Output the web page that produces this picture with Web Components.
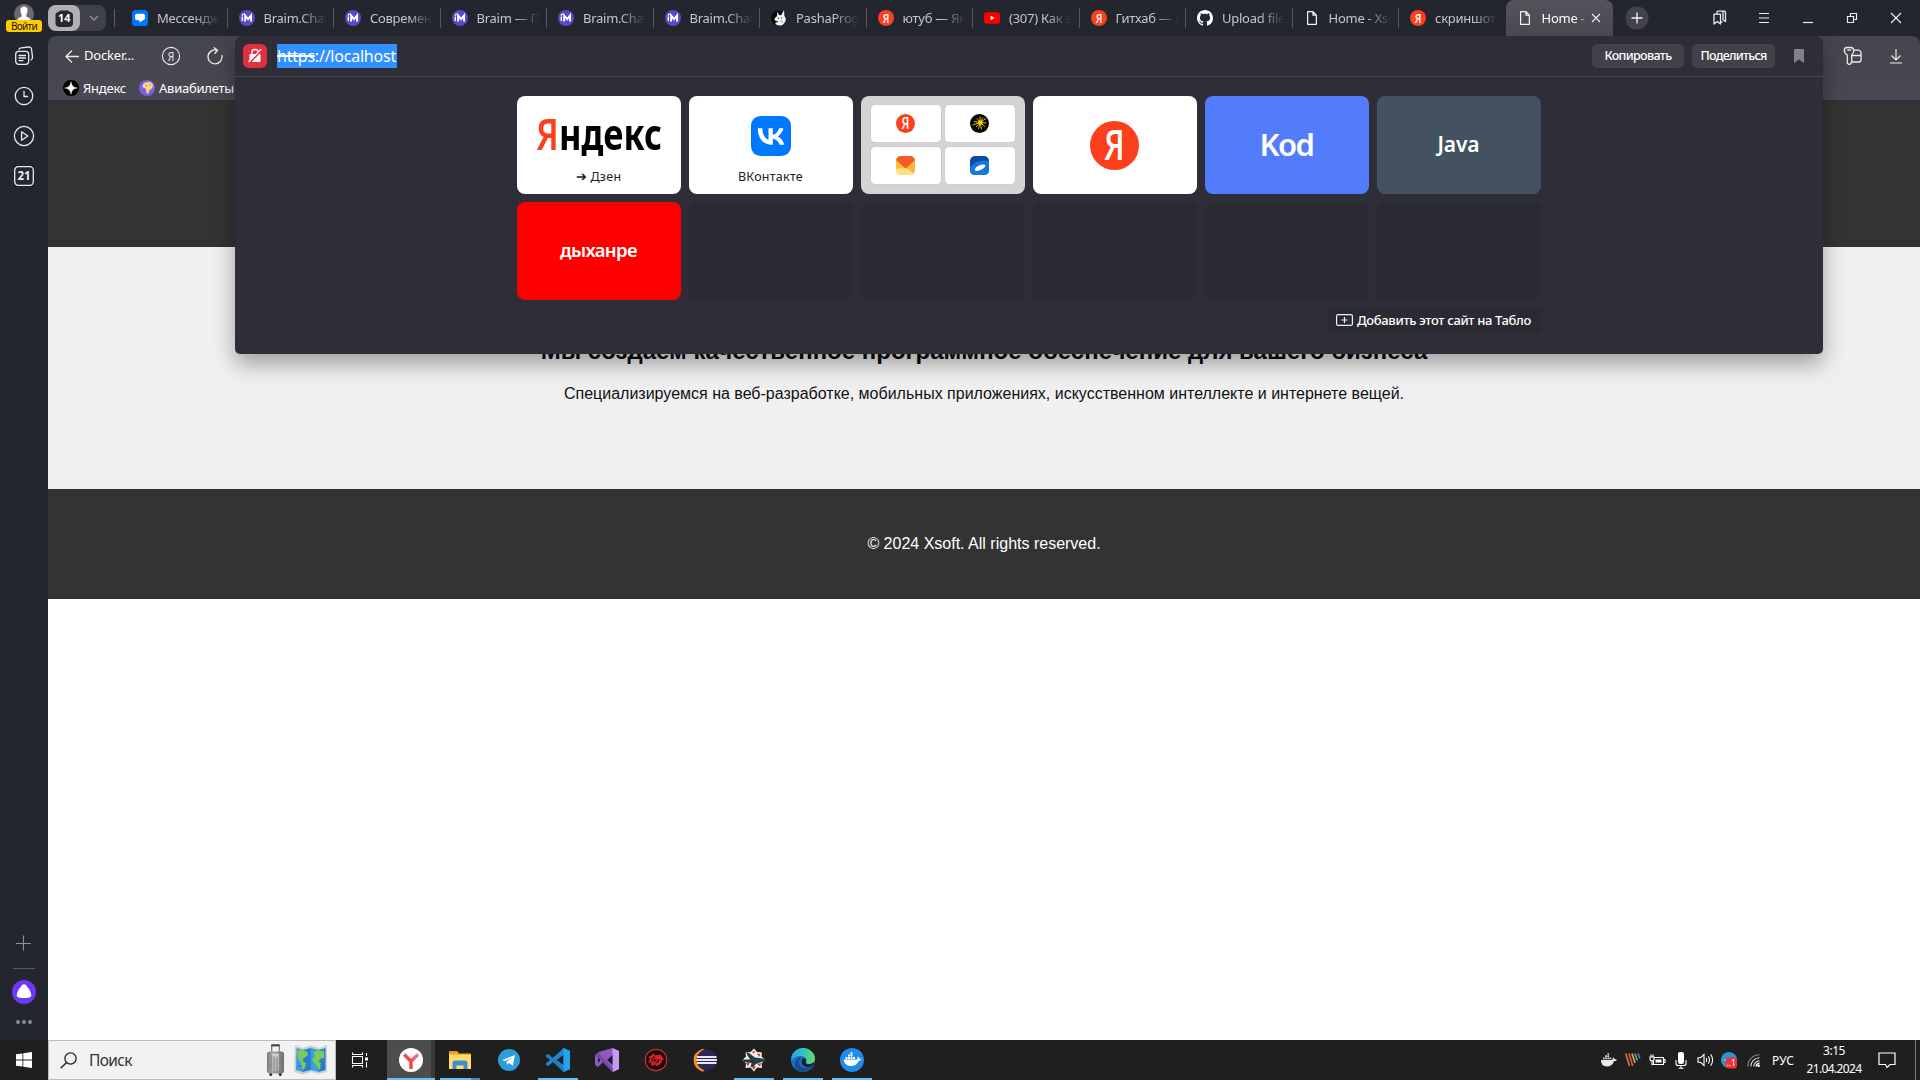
<!DOCTYPE html>
<html lang="ru">
<head>
<meta charset="utf-8">
<title>Home - Xsoft</title>
<style>
html,body{margin:0;width:1920px;height:1080px;overflow:hidden;background:#fff;font-family:"Noto Sans","Open Sans",sans-serif}
</style>
</head>
<body>
<desktop-screen></desktop-screen>
<script>
const ya=(id)=>`<circle cx="12" cy="12" r="12" fill="#fc3f1d"/><text x="12" y="19" text-anchor="middle" font-family="Open Sans" font-weight="600" font-size="20" textLength="10" lengthAdjust="spacingAndGlyphs" fill="#fff">Я</text>`;
const st='fill="none" stroke="#e9e9ee" stroke-width="1.3" stroke-linecap="round" stroke-linejoin="round"';
const braim='<circle cx="8" cy="8" r="8" fill="#5b47c9"/><path d="M3.3 11V6.600M3.200 5.600Q3.400 4 4.800 4.200" fill="none" stroke="#fff" stroke-width="1.400"/><path d="M6.100 11.400V5.400L9.100 9.200L12.100 5.400V11.400" fill="none" stroke="#fff" stroke-width="1.900"/>';
const page='<path d="M3.6 1.7H9L12.4 5.1V14.3H3.6Z M9 1.7V5.2H12.4" fill="none" stroke="#f2f2f4" stroke-width="1.2" stroke-linejoin="round"/>';
const ICONS={
 avatar:[20,20,'<circle cx="10" cy="10" r="10" fill="#696b70"/><path d="M10 2.6c2.6 0 3.7 1.8 3.5 4.3-.1 2-.9 3-1.2 4v1.6c1 .9 3.6 1 4.3 3.2L10 20 3.4 15.700c.7-2.200 3.300-2.300 4.300-3.200v-1.600c-.300-1-1.100-2-1.200-4C6.300 4.400 7.400 2.600 10 2.600Z" fill="#fff"/>'],
 collect:[20,20,`<g ${st}><rect x="1.700" y="5.300" width="13" height="13" rx="3"/><path d="M5 3.400Q5.500 2 7 1.900L15 1Q17.200 .9 17.500 3L18.500 11Q18.600 13.500 17 14"/><path d="M5 9.500H11.500M5 12H11.500M5 14.600H9"/></g>`],
 clock:[20,20,`<g ${st}><circle cx="10" cy="10" r="8.700"/><path d="M10 5.500V10.500H13.500"/></g>`],
 play:[22,22,`<g ${st}><circle cx="11" cy="11" r="9.600"/><path d="M8.600 6.800L14.800 11L8.600 15.200Z"/></g>`],
 cal:[22,22,`<rect x="1.700" y="1.700" width="18.600" height="18.600" rx="3.500" ${st}/><text x="11" y="15.200" text-anchor="middle" font-family="Noto Sans" font-weight="700" font-size="11.500" fill="#f0f0f3">21</text>`],
 plusThin:[16,16,'<path d="M7.500 .5V15.500M0 8.500H15" stroke="#8e9096" stroke-width="1.100"/>'],
 alice:[24,24,'<circle cx="12" cy="12" r="12" fill="#6c39f6"/><path d="M12 4.200C14.500 4.200 19.300 12 19.300 15.200C19.300 17.600 15.500 18 12 18S4.700 17.600 4.700 15.200C4.700 12 9.500 4.200 12 4.200Z" fill="#fff"/>'],
 dots:[16,4,'<g fill="#8b8d94"><circle cx="2" cy="2" r="2"/><circle cx="8" cy="2" r="2"/><circle cx="14" cy="2" r="2"/></g>'],
 badge14:[32,26,'<path d="M8 26A8 8 0 0 1 0 18V8A8 8 0 0 1 8 0H24A8 8 0 0 1 32 8V18A8 8 0 0 1 24 26Z" fill="#b0b0b5"/><path d="M12 5.500H20Q21.500 7 23.500 7.500Q25 8 25 10V18Q25 22 21 22H12Q7.500 22 7.500 18V10Q7.500 8 9 7.500Q11 7 12 5.500Z" fill="#26272f"/><text x="16.200" y="17.400" text-anchor="middle" font-family="Noto Sans" font-weight="700" font-size="10.800" fill="#fff">14</text>'],
 chev:[10,6,'<path d="M1 1L5 5L9 1" fill="none" stroke="#8e8f97" stroke-width="1.300"/>'],
 msg:[16,16,'<rect width="16" height="16" rx="3.600" fill="#07f"/><path d="M5 3.700H11Q13 3.700 13 5.700V8Q13 10 11 10.200L7.500 12.600V10.200H5Q3 10.200 3 8V5.700Q3 3.700 5 3.700Z" fill="#fff"/>'],
 braim:[16,16,braim],
 pasha:[16,16,'<circle cx="7.500" cy="8" r="7.500" fill="#090a0b"/><path d="M6.200 1.500L8 5L10 5.200L13 .3L13.500 6Q15.800 9 14 12Q12 15.900 8 15.600Q5 15 4 13L7.500 11.500L4.500 10.800Q2.500 9.500 4 8Q6 7 6.200 5Z" fill="#f4f4f4"/><path d="M6.700 8L8 8.300M11 7.600L10 8.500" stroke="#111" stroke-width="1"/><path d="M9 11Q12 10 11.500 13" fill="none" stroke="#999" stroke-width=".7"/>'],
 ya:[24,24,ya()],
 yt:[16,16,'<rect x="0" y="2.200" width="16" height="11.600" rx="3" fill="#f00"/><path d="M6.600 5.800L10.600 8L6.600 10.200Z" fill="#fff"/>'],
 gh:[16,16,'<path fill="#fff" d="M8 0C3.580 0 0 3.580 0 8c0 3.540 2.290 6.530 5.470 7.590.4.070.55-.17.55-.38 0-.19-.01-.82-.01-1.490-2.010.37-2.530-.49-2.690-.94-.09-.23-.48-.94-.82-1.130-.28-.15-.68-.52-.01-.53.63-.01 1.080.58 1.230.82.72 1.210 1.870.87 2.330.66.07-.52.28-.87.51-1.070-1.780-.2-3.640-.89-3.640-3.950 0-.87.31-1.590.82-2.150-.08-.2-.36-1.020.08-2.120 0 0 .67-.21 2.200.82.64-.18 1.320-.27 2-.27s1.360.09 2 .27c1.530-1.040 2.200-.82 2.200-.82.44 1.100.16 1.920.08 2.120.51.56.82 1.270.82 2.150 0 3.070-1.870 3.750-3.650 3.950.29.25.54.73.54 1.480 0 1.070-.01 1.930-.01 2.200 0 .21.15.46.55.38A8.010 8.010 0 0 0 16 8c0-4.420-3.580-8-8-8z"/>'],
 page:[16,16,page],
 x:[10,10,'<path d="M1 1L9 9M9 1L1 9" stroke="#ececef" stroke-width="1.100"/>'],
 close:[12,12,'<path d="M1 1L11 11M11 1L1 11" stroke="#ececef" stroke-width="1.200"/>'],
 newtab:[24,24,'<circle cx="12" cy="12" r="11.500" fill="#42434b"/><path d="M12 6.500V17.500M6.500 12H17.500" stroke="#f1f1f3" stroke-width="1.300"/>'],
 marks:[16,16,`<g ${st}><path d="M2 4.200H8.500V14L5.200 11.500L2 14Z"/><path d="M5 4V2Q5 1.200 6 1.200H12.500Q13.500 1.200 13.500 2.200V11.500L11 9.800V1.500M8.700 12H10"/></g>`],
 menu:[12,12,'<path d="M1 1.500H11M1 6H11M1 10.500H11" stroke="#ececef" stroke-width="1.200"/>'],
 min:[12,12,'<path d="M1 10.500H11" stroke="#ececef" stroke-width="1.200"/>'],
 restore:[12,12,'<path d="M1.500 4.500H7.500V10.500H1.500ZM4.500 4.500V1.500H10.500V7.500H7.500" fill="none" stroke="#ececef" stroke-width="1.200"/>'],
 back:[14,14,`<path d="M13.500 7.500H1M6.500 2L1 7.500L6.500 13" ${st}/>`],
 yaRing:[20,20,'<circle cx="10" cy="10" r="8.600" fill="none" stroke="#e9e9ee" stroke-width="1.100"/><text x="10" y="14.600" text-anchor="middle" font-family="Noto Sans" font-size="12.500" textLength="6.500" lengthAdjust="spacingAndGlyphs" fill="#e9e9ee">Я</text>'],
 reload:[18,18,`<path d="M15.900 8.500A7 7 0 1 1 11.300 3.200M8.200 .7L11.600 3.200L8.900 6.300" ${st}/>`],
 star:[16,16,'<circle cx="8" cy="8" r="8" fill="#000"/><path d="M8 1.800Q8.500 7.500 14.200 8Q8.500 8.500 8 14.200Q7.500 8.500 1.800 8Q7.500 7.500 8 1.800Z" fill="#fff" stroke="#fff" stroke-width=".5"/>'],
 globe:[16,16,'<circle cx="8" cy="8" r="8" fill="#7d5ee9"/><path d="M4 4.500Q5.500 2 8 2.200Q11 1 13.800 4Q14.800 6.500 12.800 8.500L10.500 10Q10.500 12.500 8.500 14Q7 13 7.200 10.500L6 8L3.800 7.500Q3 6 4 4.500Z" fill="#f7dc76"/><path d="M6 5.500L8.500 5L7.500 6.500Z M10.500 3L12 6L10.500 5Z" fill="#8a65d8"/>'],
 lock:[24,24,'<rect width="24" height="24" rx="6" fill="#e3303c"/><rect x="6.500" y="10" width="11" height="8" rx="1" fill="#fff"/><path d="M9 10V7.500Q9 5.500 12 5.500Q15 5.500 15 7.500V10" fill="none" stroke="#fff" stroke-width="1.300"/><path d="M6.500 19L19 6.200" stroke="#e3303c" stroke-width="1.600"/><path d="M5.500 18L18.200 5.200" stroke="#fff" stroke-width="1.200"/>'],
 flag:[10,14,'<path d="M1 0H9Q10 0 10 1V14L5 10.500L0 14V1Q0 0 1 0Z" fill="#828289"/>'],
 key:[20,20,`<g ${st}><path d="M4 1.500H8Q10.800 1.700 10.800 5Q10.500 7.500 8.700 8.800V16.500L7 18.400H5.500L4.300 17V9Q1.300 7.300 1.300 4.200Q1.500 1.500 4 1.500Z M4.800 4H7.500"/><path d="M11 4.200H15.500Q17.800 4.500 18 6.500V14Q18 16 16 16H9M9 9.500H18"/></g>`],
 down:[14,16,'<path d="M7 1V11.500M2.500 7.500L7 12L11.500 7.500M1 15H13" fill="none" stroke="#ececef" stroke-width="1.200"/>'],
 vk:[40,40,'<rect width="40" height="40" rx="9.500" fill="#07f"/><path d="M21.300 28.800C12.200 28.800 7 22.600 6.800 12.200H11.400C11.500 19.800 14.900 23 17.500 23.700V12.200H21.800V18.800C24.400 18.500 27.200 15.500 28.100 12.200H32.400C31.700 16.300 28.700 19.300 26.600 20.500C28.700 21.500 32.100 24.100 33.400 28.800H28.700C27.700 25.600 25.200 23.200 21.800 22.800V28.800Z" fill="#fff"/>'],
 spark:[19,19,'<circle cx="9.500" cy="9.500" r="9.500" fill="#050505"/><path d="M10 8.500L16 4.500M10 8.500L16.500 9M10 8.500L15 12.500M10 8.500L11.500 15.500M10 8.500L8.500 15M10 8.500L6 13M10 8.500L2.500 11M10 8.500L4 7.500M10 8.500L7 4.500M10 8.500L10 2.500M10 8.500L13 3.500" stroke="#fc0" stroke-width=".9"/><circle cx="10.500" cy="8.500" r="2.300" fill="#fc0"/>'],
 mail:[19,19,'<defs><linearGradient id="m" x2="1"><stop stop-color="#ffc233"/><stop offset="1" stop-color="#ffb03d"/></linearGradient></defs><rect width="19" height="19" rx="5" fill="url(#m)"/><path d="M0 13L9.500 11.500L18 17.500Q17 19 14 19H5Q0 19 0 14Z" fill="#ffdf80"/><path d="M1 2Q2 0 5 0H14Q17 0 18 2L19 4L9.500 12.500L0 4Z" fill="#f9582d"/>'],
 disk:[19,19,'<rect width="19" height="19" rx="5" fill="#0a4aa8"/><path d="M0 11Q7 3 19 5V14Q19 19 14 19H5Q0 19 0 14Z" fill="#1877df"/><ellipse cx="10" cy="11.700" rx="5.800" ry="2.300" transform="rotate(-25 10 11.700)" fill="#fff"/>'],
 addBoard:[17,12,'<rect x=".6" y=".6" width="15.800" height="10.800" rx="1.500" fill="none" stroke="#f1f1f3" stroke-width="1.200"/><path d="M8.500 3V9M5.500 6H11.500" stroke="#f1f1f3" stroke-width="1.200"/>'],
 win:[16,16,'<path d="M0 2.300L6.500 1.400V7.600H0ZM7.300 1.300L16 0V7.600H7.300ZM0 8.400H6.500V14.600L0 13.700ZM7.300 8.400H16V16L7.300 14.700Z" fill="#fff"/>'],
 search:[17,17,'<circle cx="10.500" cy="6.500" r="5.600" fill="none" stroke="#222" stroke-width="1.300"/><path d="M6.500 10.500L.7 16.300" stroke="#222" stroke-width="1.400"/>'],
 bag:[20,34,'<defs><linearGradient id="b" x2="1"><stop stop-color="#777"/><stop offset=".3" stop-color="#aaa"/><stop offset="1" stop-color="#707070"/></linearGradient></defs><path d="M6 9V2Q6 1 7 1H13Q14 1 14 2V9" fill="none" stroke="#777" stroke-width="1.300"/><path d="M5.500 1.500H14.500" stroke="#445" stroke-width="2"/><rect x="1" y="8" width="18" height="23" rx="3" fill="url(#b)"/><rect x="6.500" y="10" width="7" height="18" fill="#bcbcbc"/><path d="M5.500 12V28M8.500 14V28M11.500 14V28M14.500 12V28" stroke="#858585" stroke-width="1"/><path d="M7 11.500H13" stroke="#eee"/><circle cx="5" cy="32" r="1.600" fill="#333"/><circle cx="15" cy="32" r="1.600" fill="#333"/>'],
 map:[36,32,'<path d="M2 1L10 4L18 1.500L26 4L34 1V28L26 30L18 28L10 30.500L1 28Z" fill="#c8d1d9"/><path d="M3.500 4L10 6V28L3 26Z M18 4L26 6V28L18 26Z" fill="#3f9be3"/><path d="M10 6L18 4V26L10 28Z M26 6L32.500 4V26L26 28Z" fill="#2b7fcf"/><path d="M4 7L8 5.500L14 7.500L15 11L11 14L9 17L13 19L12 24L10 26L8 19L5 14Z M20 8L25 6.500L31 7L31 14L27 15L26 18L29 20L27 26L23 21L19 16L22 12Z" fill="#7bcb55"/><path d="M5 22H8M28 20H31V25H28Z" fill="none" stroke="#276ea9"/>'],
 view:[18,16,'<path d="M1.500 4.500H11.500V11.500H1.500ZM1.500 .5V2.500H11.500V.5M1.500 15.500V13.500H11.500V15.500M15.500 1V4M15.500 10V15.500" fill="none" stroke="#fff" stroke-width="1.100"/><rect x="14" y="5.500" width="3" height="3" fill="#fff"/>'],
 yb:[24,24,'<defs><linearGradient id="y" x1="0" y1="1" x2="1" y2="0"><stop offset=".4" stop-color="#f9402c"/><stop offset="1" stop-color="#e76fe0"/></linearGradient></defs><circle cx="12" cy="12" r="12" fill="#fff"/><path d="M5.200 6.500L12 13.300V21M12 13.300L19 6.500" fill="none" stroke="url(#y)" stroke-width="3.400"/>'],
 folder:[22,18,'<path d="M0 1Q0 0 1 0H8L10 2.500H21Q22 2.500 22 3.500V17Q22 18 21 18H0Z" fill="#f0b429"/><path d="M0 4H22V18H0Z" fill="#ffdc6b"/><path d="M3.500 18V12Q3.500 9.500 6 9.500H16Q18.500 9.500 18.500 12V18H14.500V14.500H7.500V18Z" fill="#3b91d0"/><path d="M0 0H8L9 2H0Z" fill="#dc9c14"/>'],
 tg:[22,22,'<circle cx="11" cy="11" r="11" fill="#2a9fd8"/><path d="M4.300 11L17 6L14.800 16.800L11 14L9 15.800L8.700 12.800L14.500 8L7.200 12.200Z" fill="#fff"/>'],
 code:[24,24,'<path d="M17.500 0L24 3V21L17.500 24L7 14L2.200 18L0 16.700V15.300L4 12L0 8.700V7.300L2.200 6L7 10Z" fill="#2187ce"/><path d="M17.500 7L10.500 12L17.500 17Z" fill="#202020"/><path d="M17.500 0L24 3V21L17.500 24Z" fill="#25a4ee"/><path d="M0 7.300L2.200 6L18 19.500V24Z" fill="#1f79bd" opacity=".65"/>'],
 vs:[24,24,'<path d="M0 5L3 4L18 24L24 21V3L17.500 0L8 10L3.200 5.500L0 7V17L3 19L8 14L17.500 24V0Z" fill="#8a5bc1"/><path d="M17.500 0L24 3V21L17.500 24Z" fill="#c59bf0"/><path d="M17.500 7L12 12L17.500 17Z M3 9V15L5.500 12Z" fill="#241d2c"/><path d="M0 7L3 4.500L18 20V24L3 9.500Z" fill="#754aa9"/>'],
 red:[24,24,'<circle cx="12" cy="12" r="10.700" fill="#140b0d" stroke="#cf2a39" stroke-width="1.200"/><path d="M5.500 8.500L8 9L9 6.500L11 8.500L14 8L12.500 10.500M5.500 8.500L7 11L5.500 13.500L8 14.500L8.500 17L11 15.500L13 17L14 14.500" fill="none" stroke="#e0212e" stroke-width="1.800"/><circle cx="10.800" cy="12.300" r="2" fill="none" stroke="#d8202c" stroke-width="1.200"/><path d="M15.500 16V9M13.500 10.500L16 7L19 11Z M13 17Q18 15 17.500 11" fill="#e0212e" stroke="#e0212e" stroke-width="1.200"/>'],
 eclipse:[24,24,'<path d="M9 1Q0 5 .7 12Q.5 20 9 23.500L12 23Q3.500 18 3.500 12Q3.500 5 12 1Z" fill="#f8941e"/><circle cx="13.800" cy="12" r="10.200" fill="#30275f"/><path d="M4 9H23.500M3.300 12H24M4 15H23.500" stroke="#e9e8f0" stroke-width="1.900"/>'],
 jet:[24,24,'<path d="M12 .5L15 4L20 4.500L19.500 8.500L23.500 12L19.500 15.500L20 20L15 19.500L12 23.500L8.500 19.500L3.500 20L4 15.500L.5 12L4 8.500L3.500 4.500L8.500 4Z" fill="#f4f1ef"/><path d="M10 4L13 2.500L12 6Z M15 5.500L18.500 6L17 9Z M5 6L8 6L6 9Z M4 15L8 14L6 18.500Z M15 16L19 15L18 18.500Z M10 19L14 18L12 22Z" fill="#d9352c"/><path d="M4 4.500L7 5L13 9.500L17 10L23 11L24 13L18 14.500L14 16L11 19H8.500L9.500 15L2 14L0 11.500L8 11.500Z" fill="#253c48"/>'],
 edge:[24,24,'<defs><linearGradient id="e" x2="1"><stop stop-color="#26a6e0"/><stop offset=".6" stop-color="#35c9bb"/><stop offset="1" stop-color="#6cdc58"/></linearGradient></defs><circle cx="12" cy="12" r="12" fill="#1671c2"/><path d="M.3 10C1.200 4.500 6 0 12 0C19 0 24 5.500 24 10.500C24 14.500 20.500 16.500 17.500 16C14.500 15.600 14.500 14.200 15 13.400C16 11.500 14 8 9.500 8C5 8 1.500 10.500 .3 13Z" fill="url(#e)"/><path d="M9.300 10.500C6 14.500 9 20.500 15.500 20.200C18.500 20 21 18.500 22 17.500C19 23.500 11 26 6 22C2 18 4 11 9.300 8.500Z" fill="#134f91"/><path d="M15 13.400C14.500 14.200 14.500 15.600 17.500 16C20 16.300 23 15 23.700 12.500L22.500 17Q18 21 13 18Q10 16 10.500 12Q12 9 14.500 10.500Q15.800 12 15 13.400Z" fill="#202020"/>'],
 docker:[24,24,'<circle cx="12" cy="12" r="12" fill="#218be9"/><path d="M3.800 11.500H17.500Q17 9.500 18 8.500Q19.300 9.300 19.400 10.800Q21 10.500 21.500 11.200Q20.500 12.800 18.700 13Q16.500 18 10.500 18Q4 18 3.800 11.500Z" fill="#fff"/><path d="M5.500 9H7.500V11H5.500ZM8 9H10V11H8ZM10.500 9H12.500V11H10.500ZM13 9H15V11H13ZM8 6.500H10V8.500H8ZM10.500 6.500H12.500V8.500H10.500ZM10.500 4.200H12.500V6H10.500Z" fill="#fff"/>'],
 whale:[16,14,'<path d="M0 7H11.500Q11.200 5 12.300 4.200Q13.400 5 13.500 6.200Q15.200 5.900 15.900 6.700Q14.800 8.300 13 8.300Q11 13.500 5.800 13.500Q0 13.500 0 7Z" fill="#e8e8e8"/><path d="M2 4.500H3.700V6.300H2ZM4.200 4.500H5.900V6.300H4.200ZM6.400 4.500H8.100V6.300H6.400ZM8.600 4.500H10.300V6.300H8.600ZM4.200 2.300H5.900V4H4.200ZM6.400 2.300H8.100V4H6.400ZM6.400 .3H8.100V1.800H6.400Z" fill="#d8d8d8"/>'],
 stripes:[16,14,'<g stroke-width="1.700"><path d="M.8 .5L4.500 13" stroke="#dd6d3c"/><path d="M4 .5L7.700 13" stroke="#d85d35"/><path d="M7 .5L10 10" stroke="#d5a16b"/><path d="M10 .5L12.200 7.500" stroke="#55a0a0"/><path d="M13 .5L14.800 5.500" stroke="#427fc0"/></g>'],
 power:[17,12,'<path d="M5.500 3.500H14.500V10.500H4.500V7M14.500 5.500H16V8.500H14.500M3 7V10.500H4.500M1 3H5V5.500Q4.500 7 3 7Q1.500 7 1 5.500ZM2 .5V3M4 .5V3" fill="none" stroke="#fff" stroke-width="1.100"/><path d="M6.500 5.500H12.500V8.500H6.500Z" fill="#fff"/>'],
 mic:[12,17,'<rect x="3" y="0" width="6" height="12" rx="2" fill="#fff"/><path d="M1 8V11.500Q1 13.500 3 13.500H9Q11 13.500 11 11.500V8M6 13.500V16.500M3.500 16.300H8.500" fill="none" stroke="#fff" stroke-width="1.100"/>'],
 vol:[17,14,'<path d="M1 4.700H3.500L7 1.500V12.500L3.500 9.300H1Z M9 5Q10.300 7 9 9M11.300 3.200Q13.700 7 11.300 10.800M13.700 1.300Q17.500 7 13.700 12.700" fill="none" stroke="#fff" stroke-width="1.100"/>'],
 tgTray:[16,17,'<circle cx="8" cy="8" r="8" fill="#2c95ce"/><path d="M2.500 8L6 6.700V9Z" fill="#fff"/><rect x="4.500" y="5.500" width="11.500" height="11" rx="3" fill="#ed3338"/><text x="10.200" y="14.200" font-family="Noto Sans" font-size="8.500" text-anchor="middle" fill="#fff">..1</text>'],
 wifi:[13,13,'<g fill="none" stroke-width="1.100"><path d="M.8 12.500A11.700 11.700 0 0 1 12.500 .8" stroke="#8b8b8b"/><path d="M3.800 12.500A8.700 8.700 0 0 1 12.500 3.800M6.800 12.500A5.700 5.700 0 0 1 12.500 6.800" stroke="#ddd"/><path d="M9 12.500Q9.500 9.500 12.500 9" stroke="#fff" stroke-width="1.300"/></g><circle cx="11.600" cy="11.800" r="1.300" fill="#fff"/>'],
 note:[18,16,'<path d="M1 1H17V12.500H12L9 15.500L7.500 12.500H1Z" fill="none" stroke="#fff" stroke-width="1.200"/>']
};
const def=(n,html,setup)=>customElements.define(n,class extends HTMLElement{
 constructor(){super();this.attachShadow({mode:'open'})}
 connectedCallback(){this.shadowRoot.innerHTML=typeof html==='function'?html(this):html;setup&&setup(this)}
});
def('ui-icon',h=>{const[w,t,b]=ICONS[h.getAttribute('name')];const s=+h.getAttribute('size')||w;
 return `<style>:host{display:block;flex:none;width:${s}px;height:${s*t/w}px}svg{display:block}</style><svg width="${s}" height="${s*t/w}" viewBox="0 0 ${w} ${t}">${b}</svg>`});
/* Single-line label that is tracked (or condensed, with "squeeze") to the width in its w attribute. */
def('fit-text','<style>:host{display:inline-block;white-space:nowrap}span{display:inline-block;transform-origin:0 50%}</style><span><slot></slot></span>',h=>{
 const w=+h.getAttribute('w'),s=h.shadowRoot.querySelector('span');if(!w)return;
 const m=s.getBoundingClientRect().width;
 if(h.hasAttribute('squeeze'))s.style.transform=`scaleX(${w/m})`;
 else s.style.letterSpacing=(w-m)/h.textContent.length+'px';
 h.style.width=w+'px';
});
def('browser-tab',h=>`<style>
:host{display:flex;align-items:center;flex:none;box-sizing:border-box;width:106.5px;height:36px;padding-left:11px;color:#c5c6ca;font-size:13px;background:linear-gradient(#54555d,#54555d) right 8px/1px 20px no-repeat}
:host([last]){background:none}
:host([active]){background:linear-gradient(#55545d,#494851);border-radius:8px 8px 0 0;color:#fff;width:107px;padding-left:11px}
.t{width:64px;margin-left:9px;overflow:hidden;white-space:nowrap;line-height:20px;letter-spacing:-.25px;-webkit-mask:linear-gradient(90deg,#000 58%,transparent 98%)}
:host([active]) .t{width:43px;margin-right:6px;-webkit-mask:linear-gradient(90deg,#000 75%,transparent 110%)}
</style><ui-icon name="${h.getAttribute('icon')}" size="16"></ui-icon><div class="t"><slot></slot></div>${h.hasAttribute('active')?'<ui-icon name="x"></ui-icon>':''}`);
def('tab-strip',`<style>:host{display:flex;height:36px;align-items:center;background:#23262f}
.count{display:flex;align-items:center;width:58px;height:26px;background:#40414a;border-radius:8px;gap:9px;flex:none}
.sep{width:1px;height:18px;background:#5c5d65;margin:0 6px 0 8px;flex:none}
.new{margin-left:12px}.win{margin-left:auto;display:flex;padding-right:2px}.win div{width:44px;display:grid;place-items:center}</style>
<div class="count"><ui-icon name="badge14"></ui-icon><ui-icon name="chev"></ui-icon></div><div class="sep"></div>
<browser-tab icon="msg">Мессенджер</browser-tab><browser-tab icon="braim">Braim.Chat</browser-tab><browser-tab icon="braim">Современные</browser-tab><browser-tab icon="braim">Braim — Пл</browser-tab><browser-tab icon="braim">Braim.Chat</browser-tab><browser-tab icon="braim">Braim.Chat</browser-tab><browser-tab icon="pasha">PashaProgr</browser-tab><browser-tab icon="ya">ютуб — Янд</browser-tab><browser-tab icon="yt">(307) Как за</browser-tab><browser-tab icon="ya">Гитхаб — Ян</browser-tab><browser-tab icon="gh">Upload files</browser-tab><browser-tab icon="page">Home - Xso</browser-tab><browser-tab icon="ya" last>скриншоты</browser-tab><browser-tab icon="page" active>Home - </browser-tab>
<ui-icon class="new" name="newtab"></ui-icon>
<div class="win"><div><ui-icon name="marks"></ui-icon></div><div><ui-icon name="menu"></ui-icon></div><div><ui-icon name="min"></ui-icon></div><div><ui-icon name="restore"></ui-icon></div><div><ui-icon name="close"></ui-icon></div></div>`);
def('side-bar',`<style>:host{display:flex;flex-direction:column;align-items:center;width:48px;flex:none;background:#23262f}
div{height:40px;display:grid;place-items:center;flex:none}.user{height:32px;padding:4px 0 0;display:flex;flex-direction:column;align-items:center;box-sizing:border-box;width:48px;margin-bottom:4px}
.in{margin-top:-4px;height:12px;width:36px;background:#fc0;border-radius:3px;color:#16171b;font-size:10px;line-height:12px;text-align:center;z-index:1}
.gap{flex:1}hr{width:22px;height:1px;border:0;margin:5px 0 3px;background:#55575f}.dots{height:20px;margin-bottom:8px}</style>
<div class="user"><ui-icon name="avatar"></ui-icon><span class="in"><fit-text w="26">Войти</fit-text></span></div>
<div><ui-icon name="collect"></ui-icon></div><div><ui-icon name="clock"></ui-icon></div><div><ui-icon name="play"></ui-icon></div><div><ui-icon name="cal"></ui-icon></div>
<span class="gap"></span><div><ui-icon name="plusThin"></ui-icon></div><hr><div><ui-icon name="alice"></ui-icon></div><div class="dots"><ui-icon name="dots"></ui-icon></div>`);
def('tool-bar',`<style>:host{display:block;background:#23262f;color:#fff;font-size:13px;line-height:20px}
.b{height:64px;border-radius:8px 8px 0 0;background:linear-gradient(#45454d,#4a4852);box-sizing:border-box}
.r{display:flex;align-items:center;height:40px;padding-left:17px}.end{margin-left:auto;display:flex;align-items:center;gap:26px;padding-right:17px}
.k{display:flex;align-items:center;height:24px;padding-left:15px;gap:4px}</style>
<div class="b"><div class="r"><ui-icon name="back"></ui-icon><fit-text w="50" style="margin:-2px 27px 0 5px">Docker...</fit-text><ui-icon name="yaRing"></ui-icon><ui-icon name="reload" style="margin-left:25px"></ui-icon>
<div class="end"><ui-icon name="key"></ui-icon><ui-icon name="down"></ui-icon></div></div>
<div class="k"><ui-icon name="star"></ui-icon><fit-text w="43">Яндекс</fit-text><ui-icon name="globe" style="margin-left:9px"></ui-icon><fit-text w="75">Авиабилеты</fit-text></div></div>`);
def('site-tile',h=>`<style>:host{display:flex;flex-direction:column;align-items:center;justify-content:center;position:relative;box-sizing:border-box;width:164px;height:98px;border-radius:8px;background:${h.getAttribute('bg')||'#2a2a32'};color:#fff;font-weight:600}</style><slot></slot>`);
def('table-board',`<style>:host{display:grid;grid-template-columns:repeat(6,164px);gap:8px;justify-content:center;padding-top:19px;margin-left:-1px}
.cap{font-weight:400;font-size:12.5px;line-height:18px;color:#222}.logo{font-size:43px;line-height:50px;color:#000;font-weight:700;height:52px}.logo b{color:#fc3f1d;font-weight:600}
.four{display:grid;grid-template-columns:70px 70px;grid-template-rows:37px 37px;gap:5px 4px;margin-top:-2px}.four div{background:#fff;border-radius:4px;display:grid;place-items:center;box-shadow:0 0 1px #999}</style>
<site-tile bg="#fff" style="justify-content:flex-start"><fit-text class="logo" w="126" squeeze style="margin-top:13px"><b>Я</b>ндекс</fit-text><fit-text class="cap" w="46" style="margin-top:7px">➔ Дзен</fit-text></site-tile>
<site-tile bg="#fff" style="justify-content:flex-start"><ui-icon name="vk" style="margin-top:20px"></ui-icon><fit-text class="cap" w="65" style="margin-top:12px">ВКонтакте</fit-text></site-tile>
<site-tile bg="#d4d4d6"><div class="four"><div><ui-icon name="ya" size="19"></ui-icon></div><div><ui-icon name="spark"></ui-icon></div><div><ui-icon name="mail"></ui-icon></div><div><ui-icon name="disk"></ui-icon></div></div></site-tile>
<site-tile bg="#fff"><ui-icon name="ya" size="49"></ui-icon></site-tile>
<site-tile bg="#537cfc"><fit-text w="54" style="font-size:31px;line-height:40px;margin-top:-3px">Kod</fit-text></site-tile>
<site-tile bg="#435161"><fit-text w="42" style="font-size:21px;line-height:28px;margin-top:-3px">Java</fit-text></site-tile>
<site-tile bg="#f00"><fit-text w="77" style="font-size:18.500px;line-height:26px;margin-top:-2px">дыханре</fit-text></site-tile>
<site-tile></site-tile><site-tile></site-tile><site-tile></site-tile><site-tile></site-tile><site-tile></site-tile>`);
def('address-popup',`<style>:host{display:block;box-sizing:border-box;width:1588px;height:318px;background:#2f2e38;border-radius:8px 8px 5px 5px;box-shadow:0 10px 22px rgba(0,0,0,.34);color:#fff}
.bar{display:flex;align-items:center;height:40px;border-bottom:1px solid #45444e;padding:0 19px 0 8px}
.url{background:#3390ff;height:24px;line-height:24px;margin-left:10px;font-size:16px;white-space:nowrap;width:120px}s{text-decoration-thickness:1.500px}
.btn{display:grid;place-items:center;height:24px;border-radius:5px;background:#42414a;font-size:12.500px;line-height:20px;font-weight:500}.a{width:92px;margin-left:auto}.c{width:83px;margin:0 19px 0 8px}
.add{display:flex;align-items:center;gap:4px;margin:8px 282px 0 auto;width:214px;height:26px;box-sizing:border-box;padding:0 0 2px 9px;border-radius:6px;background:#2a2a32;font-size:13px;line-height:20px;font-weight:500}</style>
<div class="bar"><ui-icon name="lock"></ui-icon><div class="url"><fit-text w="119"><s>https</s>://localhost</fit-text></div><div class="btn a"><fit-text w="67">Копировать</fit-text></div><div class="btn c"><fit-text w="66">Поделиться</fit-text></div><ui-icon name="flag"></ui-icon></div>
<table-board></table-board><div class="add"><ui-icon name="addBoard"></ui-icon><fit-text w="174">Добавить этот сайт на Табло</fit-text></div>`);
def('site-page',`<style>:host{display:block;flex:1;background:#fff;font-family:"Liberation Sans",Arial,sans-serif;font-size:16px;color:#111;text-align:center}
header{height:147px;background:#333}main{height:242px;background:#f0f0f0;box-sizing:border-box;padding-top:90px}h2{margin:0 0 21px;font-size:24px;line-height:27px;color:#0a0a0a}p{margin:0;line-height:18px}
footer{height:110px;background:#333;color:#fff;display:grid;place-items:center}</style>
<header></header><main><h2>Мы создаем качественное программное обеспечение для вашего бизнеса</h2><p>Специализируемся на веб-разработке, мобильных приложениях, искусственном интеллекте и интернете вещей.</p></main><footer><p>© 2024 Xsoft. All rights reserved.</p></footer>`);
def('task-button',h=>`<style>:host{display:flex;flex-direction:column;align-items:center;width:49px;height:40px;flex:none}
.i{flex:1;display:grid;place-items:center;width:48px}.u{height:2px;width:40px}
:host([open]) .u,:host([active]) .u{background:#76b9ed}:host([active]) .u{width:48px}:host([active]) .i{background:linear-gradient(90deg,#4d4d4d 44px,#393939 44px)}
:host([multi]) .u{background:linear-gradient(90deg,#76b9ed 31px,#5786ad 31px)}</style><div class="i"><ui-icon style="margin-top:2px" name="${h.getAttribute('icon')}"></ui-icon></div><div class="u"></div>`);
def('task-bar',`<style>:host{display:flex;height:40px;background:#1f1f1f;color:#fff}.c{display:grid;place-items:center;flex:none}
.s{width:288px;box-sizing:border-box;background:#f2f2f2;border:1px solid #bcbcbc;display:flex;align-items:center;color:#333;font-size:15.500px;padding:0 6px 0 11px}
.tray{margin-left:auto;display:flex;align-items:center}.tray .c{width:24px;height:40px}.clock{width:68px;text-align:center;font-size:12px;line-height:18px}.end{width:1px;height:40px;background:#777;margin:0 4px 0 9px}</style>
<div class="c" style="width:48px"><ui-icon name="win"></ui-icon></div>
<div class="s"><ui-icon name="search"></ui-icon><fit-text w="43" style="margin-left:12px;margin-right:auto">Поиск</fit-text><ui-icon name="bag" size="19"></ui-icon><ui-icon name="map" style="margin-left:8px"></ui-icon></div>
<div class="c" style="width:48px;margin-right:2px"><ui-icon name="view"></ui-icon></div>
<task-button icon="yb" active></task-button><task-button icon="folder" open multi></task-button><task-button icon="tg"></task-button><task-button icon="code" open></task-button><task-button icon="vs"></task-button><task-button icon="red"></task-button><task-button icon="eclipse"></task-button><task-button icon="jet" open></task-button><task-button icon="edge" open></task-button><task-button icon="docker" open></task-button>
<div class="tray"><div class="c"><ui-icon name="whale"></ui-icon></div><div class="c"><ui-icon name="stripes"></ui-icon></div><div class="c"><ui-icon name="power"></ui-icon></div><div class="c"><ui-icon name="mic"></ui-icon></div><div class="c"><ui-icon name="vol"></ui-icon></div><div class="c"><ui-icon name="tgTray"></ui-icon></div><div class="c" style="width:25px"><ui-icon name="wifi"></ui-icon></div>
<div class="c" style="width:34px;font-size:12px"><fit-text w="22">РУС</fit-text></div><div class="clock"><fit-text w="22">3:15</fit-text><br><fit-text w="55">21.04.2024</fit-text></div><div class="c" style="width:38px"><ui-icon name="note"></ui-icon></div><div class="end"></div></div>`);
def('desktop-screen',`<style>:host{display:flex;flex-direction:column;width:1920px;height:1080px}
.w{display:flex;height:1040px}.m{flex:1;min-width:0;display:flex;flex-direction:column;position:relative}
address-popup{position:absolute;left:187px;top:36px;z-index:2}tab-strip{position:relative;z-index:3}</style>
<div class="w"><side-bar></side-bar><div class="m"><tab-strip></tab-strip><tool-bar></tool-bar><site-page></site-page><address-popup></address-popup></div></div><task-bar></task-bar>`);
</script>
</body>
</html>
